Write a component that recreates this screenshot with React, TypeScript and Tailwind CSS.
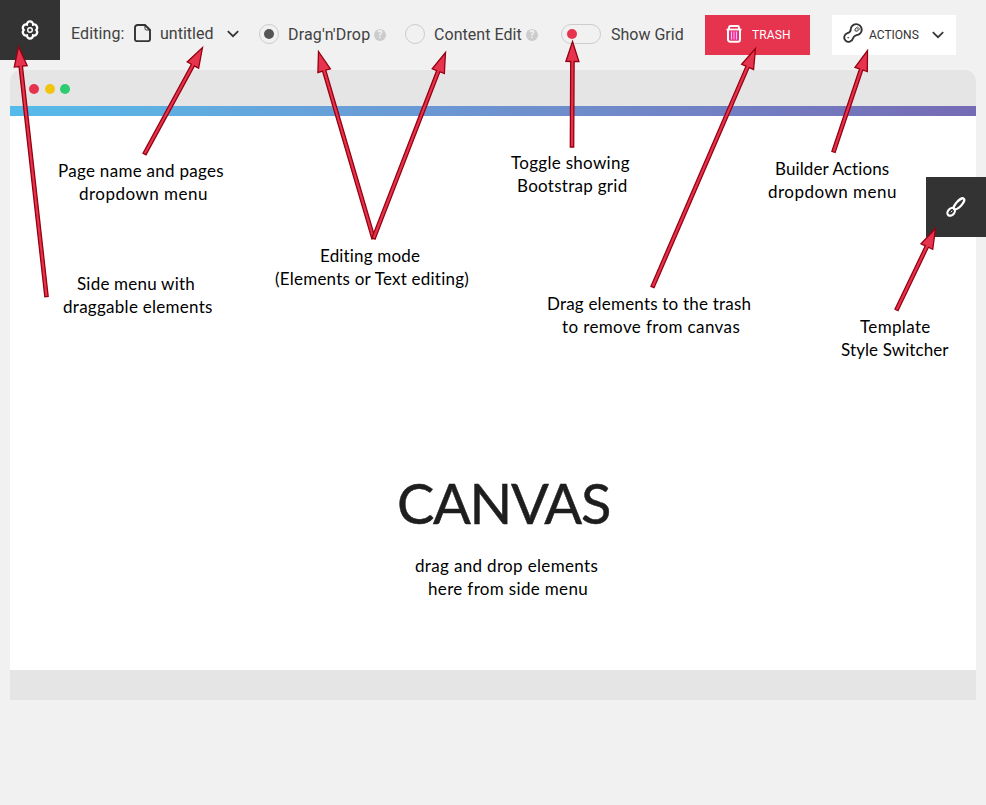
import React from "react";

type Arrow = { tip: [number, number]; tail: [number, number] };

const arrows: Arrow[] = [
  { tip: [18.5, 46.5], tail: [46.5, 296.5] },
  { tip: [202.5, 47.5], tail: [144.5, 154] },
  { tip: [318.5, 51.5], tail: [373.5, 238.5] },
  { tip: [445.5, 52.5], tail: [373.5, 238.5] },
  { tip: [572.5, 41.5], tail: [572, 147] },
  { tip: [755.5, 48.5], tail: [652.5, 287] },
  { tip: [867.5, 50.5], tail: [833.5, 152] },
  { tip: [935.5, 228.5], tail: [896.5, 310] },
];

function arrowPoints({ tip, tail }: Arrow) {
  const dx = tip[0] - tail[0];
  const dy = tip[1] - tail[1];
  const len = Math.hypot(dx, dy);
  const ux = dx / len;
  const uy = dy / len;
  const at = (back: number, side: number) =>
    `${tip[0] - ux * back - uy * side},${tip[1] - uy * back + ux * side}`;
  return [at(0, 0), at(20, 6.5), at(20, 1.7), at(len, 1.7), at(len, -1.7), at(20, -1.7), at(20, -6.5)].join(" ");
}

const labels = [
  { text: "Page name and pages", cls: "left-[58px] top-[159px] tracking-[0.29px]" },
  { text: "dropdown menu", cls: "left-[79px] top-[182px] tracking-[0.48px]" },
  { text: "Side menu with", cls: "left-[77px] top-[272px] tracking-[0.21px]" },
  { text: "draggable elements", cls: "left-[63px] top-[295px] tracking-[0.28px]" },
  { text: "Editing mode", cls: "left-[320px] top-[244px] tracking-[0.17px]" },
  { text: "(Elements or Text editing)", cls: "left-[275px] top-[267px] tracking-[0.23px]" },
  { text: "Toggle showing", cls: "left-[511px] top-[151px] tracking-[0.3px]" },
  { text: "Bootstrap grid", cls: "left-[517px] top-[174px] tracking-[0.28px]" },
  { text: "Drag elements to the trash", cls: "left-[547px] top-[292px] tracking-[0.2px]" },
  { text: "to remove from canvas", cls: "left-[562px] top-[315px] tracking-[0.38px]" },
  { text: "Builder Actions", cls: "left-[775px] top-[157px] tracking-[0.12px]" },
  { text: "dropdown menu", cls: "left-[768px] top-[180px] tracking-[0.48px]" },
  { text: "Template", cls: "left-[860px] top-[315px] tracking-[0.35px]" },
  { text: "Style Switcher", cls: "left-[841px] top-[338px] tracking-[0.1px]" },
  { text: "drag and drop elements", cls: "left-[415px] top-[554px] tracking-[0.34px]" },
  { text: "here from side menu", cls: "left-[428px] top-[577px] tracking-[0.34px]" },
];

function Gear() {
  return (
    <svg width="20" height="20" viewBox="0 0 20 20" fill="none" stroke="#fff">
      <path
        d="M6.900 4.630A3.100 3.200 0 0 1 13.100 4.630A3.200 3.200 0 0 1 16.200 10A3.200 3.200 0 0 1 13.100 15.370A3.100 3.200 0 0 1 6.900 15.370A3.200 3.200 0 0 1 3.800 10A3.200 3.200 0 0 1 6.900 4.630Z"
        strokeWidth="2.200"
      />
      <circle cx="10" cy="10" r="2.300" strokeWidth="1.400" />
    </svg>
  );
}

function PageIcon() {
  return (
    <svg width="17" height="18" viewBox="0 0 17 18" fill="none" stroke="#333" strokeWidth="1.9">
      <path d="M3.500 1H11l5 5v9.200a1.900 1.900 0 0 1-1.900 1.900H2.900A1.900 1.900 0 0 1 1 15.200V3.500A2.500 2.500 0 0 1 3.500 1Z" />
      <path d="M11 1v3.600a1.400 1.400 0 0 0 1.400 1.400H16" strokeWidth="1" />
    </svg>
  );
}

function Chevron() {
  return (
    <svg width="12" height="8" viewBox="0 0 12 8" fill="none" stroke="#333" strokeWidth="1.700">
      <path d="M.8 1.200 6 6.200 11.200 1.200" />
    </svg>
  );
}

function TrashIcon() {
  return (
    <svg width="16" height="18" viewBox="0 0 16 18" fill="none" stroke="#fff">
      <path d="M.5 4.500h15" strokeWidth="1.800" />
      <path d="M3 4V2.500A1.500 1.500 0 0 1 4.500 1h7A1.500 1.500 0 0 1 13 2.500V4" strokeWidth="1.900" />
      <path d="M2 5v9.500A2.200 2.200 0 0 0 4.200 16.700h7.600A2.200 2.200 0 0 0 14 14.500V5" strokeWidth="2" />
      <path d="M4.500 6v9M6.500 6v9M9.500 6v9M11.500 6v9" stroke="#ec2fae" strokeWidth="1" />
      <path d="M5.500 6.500v8M8 6.500v8M10.500 6.500v8" stroke="#ffc0ea" strokeWidth="1" />
    </svg>
  );
}

function Wrench() {
  return (
    <svg width="20" height="20" viewBox="0 0 20 20" fill="none" stroke="#333">
      <path
        d="M7.700 6.800A5.500 5.500 0 1 1 13.400 12.100C11.600 12.600 10.600 13.400 9.900 15.500A4.400 4.400 0 1 1 4.400 10.200C6.400 9.600 7.400 8.600 7.700 6.800Z"
        strokeWidth="1.900"
      />
      <circle cx="5.200" cy="14.700" r=".5" strokeWidth=".8" />
      <path d="M14.700 3.800 11.900 6.200l.3 1.700 1.900.3 2.900-2.600M13.900 6.400l2-1.800" strokeWidth="1" />
    </svg>
  );
}

function Brush() {
  return (
    <svg width="20" height="20" viewBox="0 0 20 20" fill="none" stroke="#fff" strokeWidth="2.200">
      <ellipse cx="13" cy="6.900" rx="7.100" ry="2.700" transform="rotate(-47 13 6.900)" />
      <ellipse cx="5.200" cy="14.800" rx="4.400" ry="3.200" transform="rotate(-48 5.200 14.800)" />
      <path d="M6.200 13.800 5 15.200" strokeWidth="1" />
    </svg>
  );
}

function Help() {
  return (
    <span className="mt-[2px] flex h-3 w-3 shrink-0 items-center justify-center rounded-full bg-[#ccc] text-[10px] leading-3 font-bold text-[#f5f5f5]">
      ?
    </span>
  );
}

export default function App() {
  return (
    <div className="relative h-[805px] w-[986px] overflow-hidden bg-[#f1f1f1] font-[Roboto,sans-serif] text-[16px] text-[#333]">
      <header className="flex h-[70px] items-start whitespace-nowrap">
        <button className="flex h-[60px] w-[60px] shrink-0 items-center justify-center bg-[#333] pr-px">
          <Gear />
        </button>
        <div className="flex h-[68px] items-center text-[#414141]">
          <span className="ml-[11px] w-[63px] tracking-[0.1px]">Editing:</span>
          <span className="-mt-[2px] w-[26px]"><PageIcon /></span>
          <span className="w-[67px]">untitled</span>
          <span className="w-[32px]"><Chevron /></span>
          <span className="flex h-5 w-5 shrink-0 items-center justify-center rounded-full border border-[#ccc]">
            <span className="h-[10px] w-[10px] rounded-full bg-[#555]" />
          </span>
          <span className="mt-px ml-[9px] w-[86px] tracking-[0.15px]">Drag'n'Drop</span>
          <Help />
          <span className="ml-[19px] h-5 w-5 shrink-0 rounded-full border border-[#ccc]" />
          <span className="mt-px ml-[9px] w-[92px] tracking-[0.05px]">Content Edit</span>
          <Help />
          <span className="ml-[23px] flex h-5 w-10 shrink-0 items-center rounded-full border border-[#ccc] pl-[5px]">
            <span className="h-[10px] w-[10px] rounded-full bg-[#e6344f]" />
          </span>
          <span className="mt-px ml-[10px] w-[94px]">Show Grid</span>
        </div>
        <button className="mt-[15px] flex h-10 w-[105px] shrink-0 items-center bg-[#e6344f] pl-[21px] text-[12px] text-white">
          <span className="-mt-[2px]"><TrashIcon /></span>
          <span className="ml-[10px] tracking-[0.1px]">TRASH</span>
        </button>
        <button className="mt-[15px] ml-[22px] flex h-10 w-[124px] shrink-0 items-center bg-white pl-[11px] text-[12px]">
          <span className="-mt-[4px]"><Wrench /></span>
          <span className="ml-[6px] w-[63px] text-left">ACTIONS</span>
          <Chevron />
        </button>
      </header>

      <main className="mx-[10px] flex h-[630px] flex-col overflow-hidden rounded-t-[10px] bg-white">
        <div className="flex h-9 items-center gap-[6px] bg-[#e5e5e5] pt-[2px] pl-[19px]">
          <span className="h-[10px] w-[10px] rounded-full bg-[#e6344f]" />
          <span className="h-[10px] w-[10px] rounded-full bg-[#f1c40f]" />
          <span className="-ml-px h-[10px] w-[10px] rounded-full bg-[#2ecc71]" />
        </div>
        <div className="h-[10px] bg-linear-to-r from-[#54bbea] to-[#756bb5]" />
        <div className="flex-1 pt-[347px] pl-[387px]">
          <h1 className="font-[Lato,sans-serif] text-[56px] leading-[80px] tracking-[-1.4px] text-[#1e1e1e] [-webkit-text-stroke:0.5px_#1e1e1e]">CANVAS</h1>
        </div>
        <div className="h-[30px] bg-[#e5e5e5]" />
      </main>

      <button className="absolute top-[177px] right-0 flex h-[60px] w-[60px] items-center justify-center bg-[#333]">
        <Brush />
      </button>

      {labels.map((l, i) => (
        <p key={i} className={`absolute font-[Lato,sans-serif] text-[17px] leading-[23px] whitespace-nowrap text-black ${l.cls}`}>
          {l.text}
        </p>
      ))}

      <svg className="pointer-events-none absolute inset-0" width="986" height="805" fill="#e6344f" stroke="#960010" strokeWidth="1.3">
        {arrows.map((a, i) => (
          <polygon key={i} points={arrowPoints(a)} />
        ))}
      </svg>
    </div>
  );
}
